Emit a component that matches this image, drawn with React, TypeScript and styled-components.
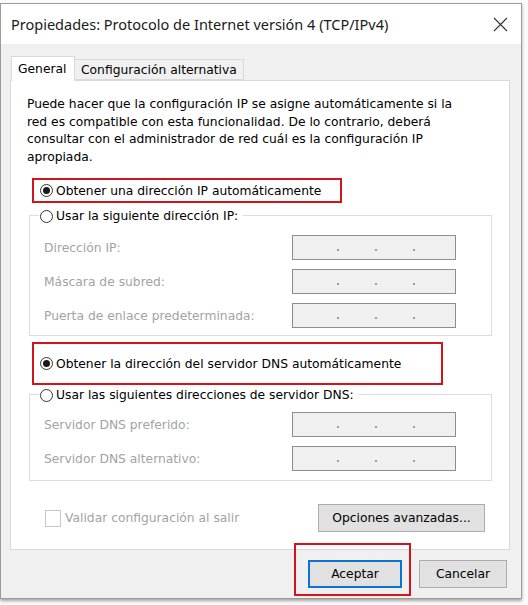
import React from "react";
import styled, { createGlobalStyle } from "styled-components";

const GlobalStyle = createGlobalStyle`
  body {
    margin: 0;
    background: #fbfbfb;
    font-family: "DejaVu Sans", Verdana, sans-serif;
  }
`;

const FONT = `"DejaVu Sans", Verdana, sans-serif`;
const SIZE = "12.3px";

const Page = styled.div`
  width: 528px;
  height: 605px;
  padding-top: 3px;
  box-sizing: border-box;
  overflow: hidden;
`;

const Window = styled.div`
  width: 522px;
  box-sizing: border-box;
  border: 1px solid #9c9c9c;
  background: #f0f0f0;
  box-shadow: 0 2px 3px rgba(0, 0, 0, 0.35);
`;

const TitleBar = styled.div`
  height: 40px;
  background: #fff;
  display: flex;
  align-items: center;
  justify-content: space-between;
  padding: 0 13px 0 10px;
  font-family: "Noto Sans", "Open Sans", sans-serif;
  font-size: 14.5px;
  color: #1a1a1a;
`;

const Body = styled.div`
  padding: 11px 11px 10px 9px;
  font-family: ${FONT};
`;

const Tabs = styled.div`
  display: flex;
  align-items: flex-end;
  height: 25px;
  margin-left: 1px;
  position: relative;
  z-index: 1;
`;

const Tab = styled.div<{ active?: boolean }>`
  height: ${p => (p.active ? 25 : 21)}px;
  width: ${p => (p.active ? "64px" : "auto")};
  box-sizing: border-box;
  display: flex;
  align-items: center;
  padding: 0 6px;
  background: ${p => (p.active ? "#fff" : "#f0f0f0")};
  border: 1px solid #d9d9d9;
  border-bottom: ${p => (p.active ? "none" : "1px solid #d9d9d9")};
  border-left: ${p => (p.active ? "1px solid #d9d9d9" : "none")};
  font-size: ${SIZE};
  color: #000;
  margin-bottom: ${p => (p.active ? -1 : 0)}px;
`;

const Panel = styled.div`
  height: 470px;
  box-sizing: border-box;
  background: #fff;
  border: 1px solid #d9d9d9;
  padding-top: 15px;
`;

const Description = styled.p`
  margin: 0 0 0 16px;
  font-size: ${SIZE};
  line-height: 17.5px;
  color: #000;
  span {
    display: block;
    white-space: nowrap;
  }
`;

const Highlight = styled.div<{ w: number; h: number; top: number }>`
  width: ${p => p.w}px;
  height: ${p => p.h}px;
  box-sizing: border-box;
  margin: ${p => p.top}px 0 0 21px;
  border: 2px solid #d3141c;
  display: flex;
  align-items: center;
  padding-left: 6px;
`;

const RadioLabel = styled.label`
  display: inline-flex;
  align-items: center;
  gap: 3px;
  font-size: ${SIZE};
  color: #000;
  white-space: nowrap;
`;

const Circle = styled.span<{ checked?: boolean }>`
  width: 13px;
  height: 13px;
  box-sizing: border-box;
  border-radius: 50%;
  border: 1px solid #333;
  background: #fff;
  display: flex;
  align-items: center;
  justify-content: center;
  &::after {
    content: "";
    width: 7px;
    height: 7px;
    border-radius: 50%;
    background: ${p => (p.checked ? "#1a1a1a" : "transparent")};
  }
`;

const Group = styled.div<{ top: number; h: number }>`
  width: 463px;
  height: ${p => p.h}px;
  box-sizing: border-box;
  margin: ${p => p.top}px 0 0 18px;
  border: 1px solid #dcdcdc;
  display: flex;
  flex-direction: column;
`;

const Legend = styled.div`
  align-self: flex-start;
  height: 18px;
  margin: -9px 0 0 9px;
  padding: 0 5px 0 1px;
  background: #fff;
  display: flex;
  align-items: center;
`;

const Rows = styled.div<{ top: number }>`
  margin-top: ${p => p.top}px;
  display: flex;
  flex-direction: column;
  gap: 9px;
`;

const Row = styled.div`
  display: grid;
  grid-template-columns: 248px 164px;
  align-items: center;
  padding-left: 14px;
  height: 25px;
`;

const FieldLabel = styled.span`
  font-size: ${SIZE};
  color: #a3a3a3;
  white-space: nowrap;
`;

const IpBox = styled.div`
  height: 25px;
  box-sizing: border-box;
  border: 1px solid #8d8d8d;
  background: #f0f0f0;
  display: flex;
  align-items: flex-end;
  justify-content: center;
  gap: 36px;
  padding: 0 0 8px 4px;
  span {
    width: 2px;
    height: 2px;
    background: #9a9a9a;
  }
`;

const BottomRow = styled.div`
  display: flex;
  align-items: center;
  justify-content: space-between;
  margin: 23px 0 0 34px;
  width: 440px;
`;

const CheckLabel = styled.label`
  display: flex;
  align-items: center;
  gap: 4px;
  font-size: ${SIZE};
  color: #a3a3a3;
`;

const CheckBox = styled.span`
  width: 16px;
  height: 17px;
  box-sizing: border-box;
  border: 1px solid #c8c8c8;
  background: #fff;
`;

const Button = styled.button<{ primary?: boolean; w: number }>`
  width: ${p => p.w}px;
  height: 28px;
  box-sizing: border-box;
  font-family: ${FONT};
  font-size: ${SIZE};
  color: #000;
  background: #e1e1e1;
  border: 1px solid ${p => (p.primary ? "#0a74d0" : "#adadad")};
  box-shadow: ${p => (p.primary ? "inset 0 0 0 1px #0a74d0" : "none")};
  padding: 0;
`;

const Footer = styled.div`
  display: flex;
  justify-content: flex-end;
  gap: 17px;
  margin-top: 10px;
  padding-right: 3px;
`;

const Marked = styled.div`
  position: relative;
  display: flex;
`;

const MarkBox = styled.div`
  position: absolute;
  top: -17px;
  left: -14px;
  right: -9px;
  bottom: -8px;
  border: 2px solid #d3141c;
  pointer-events: none;
`;

const IpField = () => (
  <IpBox>
    <span />
    <span />
    <span />
  </IpBox>
);

const Radio = ({ checked, text }: { checked?: boolean; text: string }) => (
  <RadioLabel>
    <Circle checked={checked} />
    {text}
  </RadioLabel>
);

export default function App() {
  return (
    <Page>
      <GlobalStyle />
      <Window>
        <TitleBar>
          <span>Propiedades: Protocolo de Internet versión 4 (TCP/IPv4)</span>
          <svg width="15" height="15" viewBox="0 0 15 15">
            <path d="M1 1L14 14M14 1L1 14" stroke="#333" strokeWidth="1.1" />
          </svg>
        </TitleBar>
        <Body>
          <Tabs>
            <Tab active>General</Tab>
            <Tab>Configuración alternativa</Tab>
          </Tabs>
          <Panel>
            <Description>
              <span>Puede hacer que la configuración IP se asigne automáticamente si la</span>
              <span>red es compatible con esta funcionalidad. De lo contrario, deberá</span>
              <span>consultar con el administrador de red cuál es la configuración IP</span>
              <span>apropiada.</span>
            </Description>

            <Highlight w={310} h={25} top={12}>
              <Radio checked text="Obtener una dirección IP automáticamente" />
            </Highlight>

            <Group top={12} h={121}>
              <Legend>
                <Radio text="Usar la siguiente dirección IP:" />
              </Legend>
              <Rows top={10}>
                <Row>
                  <FieldLabel>Dirección IP:</FieldLabel>
                  <IpField />
                </Row>
                <Row>
                  <FieldLabel>Máscara de subred:</FieldLabel>
                  <IpField />
                </Row>
                <Row>
                  <FieldLabel>Puerta de enlace predeterminada:</FieldLabel>
                  <IpField />
                </Row>
              </Rows>
            </Group>

            <Highlight w={411} h={43} top={6}>
              <Radio checked text="Obtener la dirección del servidor DNS automáticamente" />
            </Highlight>

            <Group top={9} h={87}>
              <Legend>
                <Radio text="Usar las siguientes direcciones de servidor DNS:" />
              </Legend>
              <Rows top={8}>
                <Row>
                  <FieldLabel>Servidor DNS preferido:</FieldLabel>
                  <IpField />
                </Row>
                <Row>
                  <FieldLabel>Servidor DNS alternativo:</FieldLabel>
                  <IpField />
                </Row>
              </Rows>
            </Group>

            <BottomRow>
              <CheckLabel>
                <CheckBox />
                Validar configuración al salir
              </CheckLabel>
              <Button w={167}>Opciones avanzadas...</Button>
            </BottomRow>
          </Panel>
          <Footer>
            <Marked>
              <Button primary w={94}>Aceptar</Button>
              <MarkBox />
            </Marked>
            <Button w={88}>Cancelar</Button>
          </Footer>
        </Body>
      </Window>
    </Page>
  );
}
